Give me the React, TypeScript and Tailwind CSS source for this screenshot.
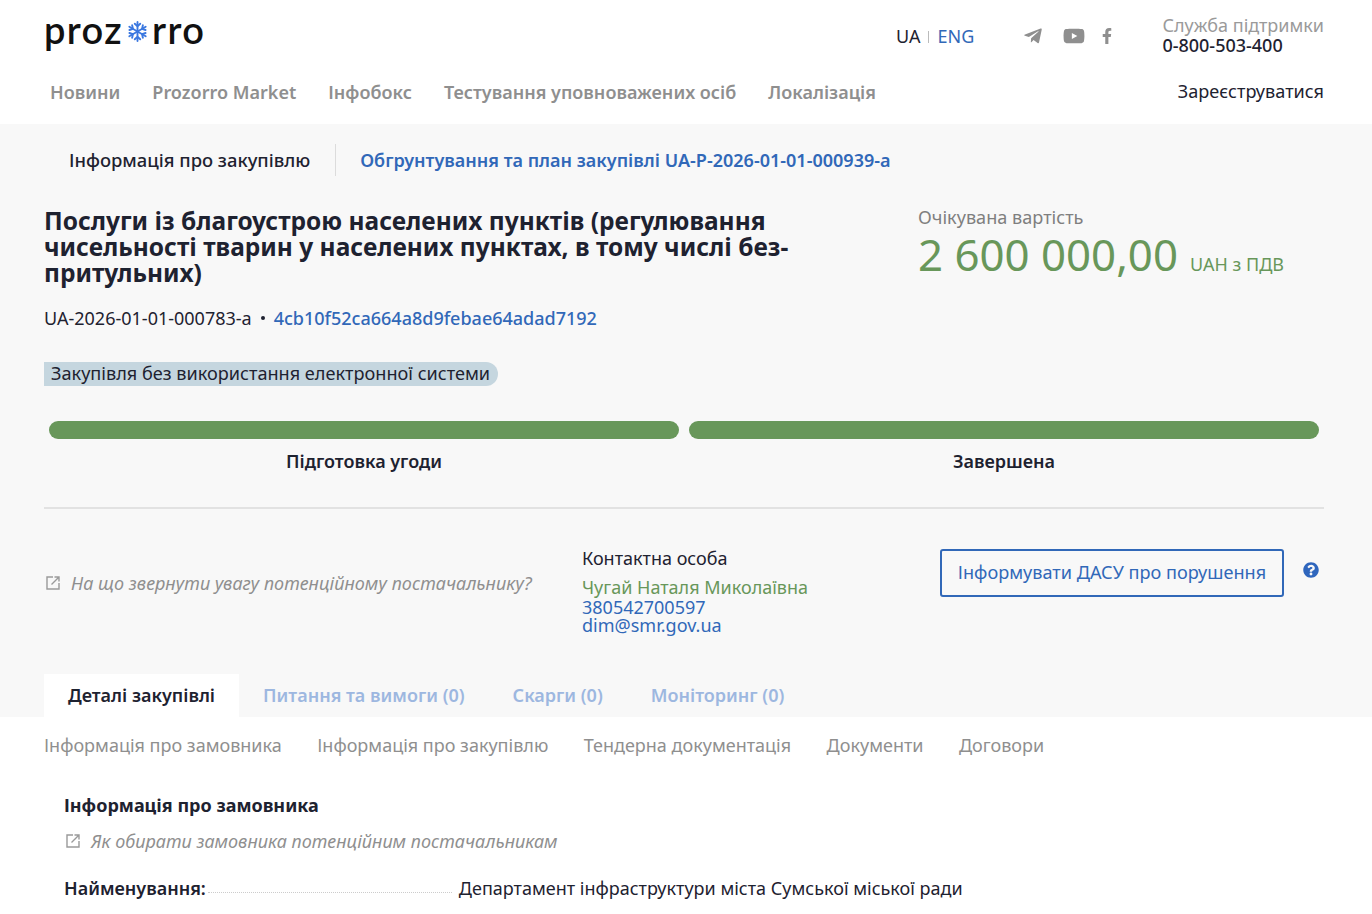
import React from 'react';
import { FaTelegramPlane, FaYoutube, FaFacebookF, FaQuestionCircle } from 'react-icons/fa';

const font = { fontFamily: '"Noto Sans", sans-serif' };

function Snowflake() {
  const arms = [0, 60, 120, 180, 240, 300];
  return (
    <svg width="21" height="21" viewBox="-10 -10 20 20" className="mx-[4px] mt-[4px]" fill="none" stroke="#3b78e0" strokeWidth="1.8" strokeLinecap="round">
      {arms.map((a) => (
        <g key={a} transform={`rotate(${a})`}>
          <path d="M0 0V-9" />
          <path d="M-2.6 -7.4L0 -5L2.6 -7.4" />
        </g>
      ))}
    </svg>
  );
}

function Logo() {
  return (
    <div className="flex items-center text-[38px] leading-none tracking-[1.4px] text-[#111] font-['Lato',sans-serif] font-semibold">
      <span>proz</span>
      <Snowflake />
      <span>rro</span>
    </div>
  );
}

function LinkIcon() {
  return (
    <svg width="16" height="16" viewBox="0 0 16 16" fill="none" stroke="#9a9a9a" strokeWidth="1.4" className="ml-[1px] mr-[10px] shrink-0">
      <path d="M8 2H2V14H14V8" />
      <path d="M6.5 9.5L13.5 2.5M9.5 2H14V6.5" />
    </svg>
  );
}

function Header() {
  const nav = ['Новини', 'Prozorro Market', 'Інфобокс', 'Тестування уповноважених осіб', 'Локалізація'];
  return (
    <header className="h-[124px] bg-white pl-[44px] pr-[48px]">
      <div className="flex h-[68px] items-start justify-between">
        <div className="pt-[10px]">
          <Logo />
        </div>
        <div className="flex items-start pt-[15px]">
          <div className="flex items-center pt-[10px] text-[18px] leading-[23px]">
            <span className="text-[#1e2230]">UA</span>
            <span className="mx-[7px] h-[12px] w-px bg-[#bbb]" />
            <span className="ml-[2px] text-[#3168b8]">ENG</span>
          </div>
          <div className="ml-[49px] flex items-center pt-[10px] text-[#8f8f8f]">
            <FaTelegramPlane size={20} />
            <FaYoutube size={22} className="ml-[20px]" />
            <FaFacebookF size={16} className="ml-[14px]" />
          </div>
          <div className="ml-[47px] flex flex-col text-[18px] leading-[20px]">
            <span className="text-[#9a9a9a]">Служба підтримки</span>
            <span className="font-medium text-[#1e2230]">0-800-503-400</span>
          </div>
        </div>
      </div>
      <div className="flex items-center justify-between pl-[6px]">
        <nav className="flex gap-[32px] text-[18.03px] font-semibold leading-[48px] text-[#8f8f8f]">
          {nav.map((n) => (
            <span key={n}>{n}</span>
          ))}
        </nav>
        <span className="text-[18.1px] text-[#1e2230]">Зареєструватися</span>
      </div>
    </header>
  );
}

function Summary() {
  return (
    <section className="h-[593px] bg-[#f8f8f8] pl-[44px] pr-[48px]">
      <div className="flex h-[74px] items-center pb-[3px] pl-[25px]">
        <span className="text-[18.4px] font-medium leading-[32px] text-[#1e2230]">Інформація про закупівлю</span>
        <span className="ml-[25px] mr-[24px] h-[32px] w-px bg-[#dcdcdc]" />
        <span className="text-[18.03px] font-semibold leading-[32px] text-[#3168b8]">Обгрунтування та план закупівлі UA-P-2026-01-01-000939-a</span>
      </div>
      <div className="flex justify-between">
        <div className="w-[760px]">
          <h1 className="mt-[10px] text-[24.5px] font-bold leading-[26px] text-[#1e2230]">
            Послуги із благоустрою населених пунктів (регулювання чисельності тварин у населених пунктах, в тому числі без-
            <br />
            притульних)
          </h1>
          <div className="mt-[20px] flex items-center text-[18px] leading-[24px] text-[#1e2230]">
            <span>UA-2026-01-01-000783-a</span>
            <span className="mx-[9px] h-[4px] w-[4px] rounded-full bg-[#1e2230]" />
            <span className="font-medium text-[#3168b8]">4cb10f52ca664a8d9febae64adad7192</span>
          </div>
          <div className="mt-[32px] flex">
            <span className="rounded-r-full bg-[#c5d6df] pb-[2px] pl-[7px] pr-[8px] text-[18.12px] leading-[22px] text-[#1e2230]">Закупівля без використання електронної системи</span>
          </div>
        </div>
        <div className="w-[406px]">
          <div className="mt-[7px] text-[18.1px] leading-[24px] text-[#7f7f7f]">Очікувана вартість</div>
          <div className="-mt-[1px] flex items-baseline text-[#68975a]">
            <span className="text-[43.8px] leading-[52px]">2 600 000,00</span>
            <span className="ml-[12px] text-[18px]">UAH з ПДВ</span>
          </div>
        </div>
      </div>
      <div className="mt-[35px] grid grid-cols-2 gap-[10px] px-[5px]">
        {['Підготовка угоди', 'Завершена'].map((label) => (
          <div key={label} className="flex flex-col items-center">
            <div className="h-[18px] w-full rounded-full bg-[#68975a]" />
            <div className="mt-[10px] text-[18px] font-semibold leading-[24px] text-[#1e2230]">{label}</div>
          </div>
        ))}
      </div>
      <div className="mt-[34px] h-[2px] bg-[#e2e2e2]" />
      <div className="mt-[37px] flex items-start">
        <div className="flex w-[538px] items-center pt-[25px] text-[18px] italic leading-[24px] text-[#8f8f8f]">
          <LinkIcon />
          <span>На що звернути увагу потенційному постачальнику?</span>
        </div>
        <div className="w-[358px] text-[18px] leading-[19px]">
          <div className="leading-[24px] text-[#1e2230]">Контактна особа</div>
          <div className="mt-[8px] text-[#68975a]">Чугай Наталя Миколаївна</div>
          <div className="mt-[1px] text-[#3168b8]">380542700597</div>
          <div className="-mt-[1px] text-[#3168b8]">dim@smr.gov.ua</div>
        </div>
        <div className="mt-[3px] flex items-start">
          <button className="h-[48px] w-[344px] rounded-[3px] border-2 border-[#3168b8] pb-[1px] text-[18.1px] text-[#3168b8]">Інформувати ДАСУ про порушення</button>
          <FaQuestionCircle size={16} className="ml-[19px] mt-[13px] text-[#2f66bd]" />
        </div>
      </div>
      <div className="mt-[39px] flex text-[18px] font-semibold leading-[43px] text-[#9db7e0]">
        <span className="bg-white px-[24px] text-[#1e2230]">Деталі закупівлі</span>
        <span className="ml-[24px]">Питання та вимоги (0)</span>
        <span className="ml-[48px]">Скарги (0)</span>
        <span className="ml-[48px]">Моніторинг (0)</span>
      </div>
    </section>
  );
}

function Details() {
  const tabs = ['Інформація про замовника', 'Інформація про закупівлю', 'Тендерна документація', 'Документи', 'Договори'];
  return (
    <section className="bg-white pl-[44px] pr-[48px]">
      <div className="flex gap-[35.5px] pt-[16px] text-[18px] leading-[24px] text-[#8f8f8f]">
        {tabs.map((t) => (
          <span key={t}>{t}</span>
        ))}
      </div>
      <div className="pl-[20px]">
        <h2 className="mt-[36px] text-[18px] font-bold leading-[24px] text-[#1e2230]">Інформація про замовника</h2>
        <div className="mt-[12px] flex items-center text-[18px] italic leading-[24px] text-[#8f8f8f]">
          <LinkIcon />
          <span>Як обирати замовника потенційним постачальникам</span>
        </div>
        <div className="mt-[23px] flex items-baseline text-[18px] leading-[24px] text-[#1e2230]">
          <span className="font-semibold">Найменування:</span>
          <span className="ml-[2px] h-[1px] w-[244px] -translate-y-[2px] border-b border-dotted border-[#ccc]" />
          <span className="ml-[7px]">Департамент інфраструктури міста Сумської міської ради</span>
        </div>
      </div>
    </section>
  );
}

export default function App() {
  return (
    <div className="h-[914px] overflow-hidden bg-white" style={font}>
      <Header />
      <Summary />
      <Details />
    </div>
  );
}
